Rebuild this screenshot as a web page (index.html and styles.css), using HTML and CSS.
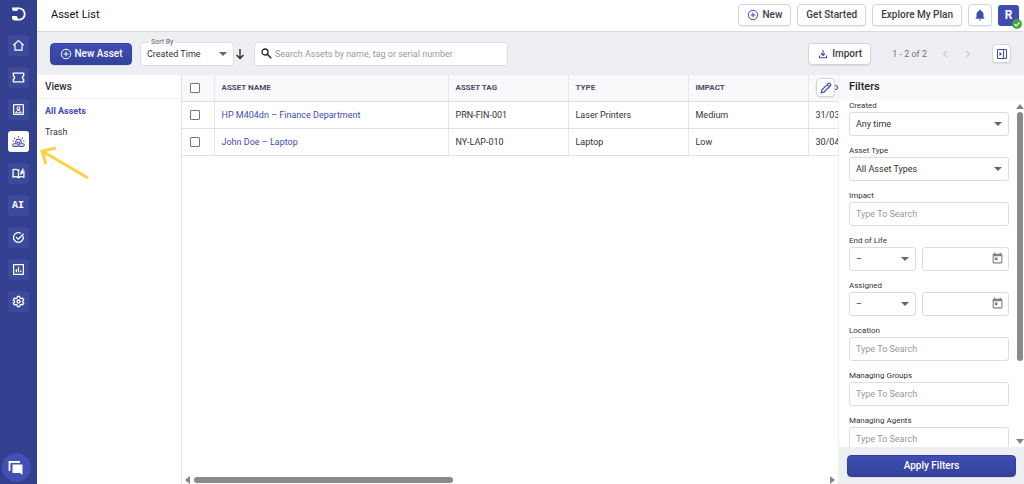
FILE: index.html
```
<!DOCTYPE html>
<html lang="en">
<head>
    <meta charset="UTF-8">
    <meta name="viewport" content="width=device-width, initial-scale=1.0">
    <title>Asset List</title>
    <link rel="stylesheet" href="styles.css">
</head>
<body>

<div class="app">
    <nav class="sidebar">
        <a href="#" class="logo" aria-label="Home page">
            <svg width="16" height="16" viewBox="0 0 16 16"><path d="M7 2.300h2a5.700 5.700 0 0 1 0 11.400H7" fill="none" stroke="#fff" stroke-width="1.800"/><path d="M2 1.500h5.500V5H4.500A2.500 2.500 0 0 1 2 2.500zM2 10h4a1.500 1.500 0 0 1 1.500 1.500v3H5a3 3 0 0 1-3-3z" fill="#fff"/></svg>
        </a>
        <a href="#" class="nav-item" aria-label="Dashboard">
            <svg class="icon" viewBox="0 0 24 24"><path d="M2.500 11.500 12 3l9.500 8.500M5.500 10v10.500h13V10" fill="none" stroke="currentColor" stroke-width="2.200"/></svg>
        </a>
        <a href="#" class="nav-item" aria-label="Tickets">
            <svg class="icon" viewBox="0 0 24 24"><path d="M2.500 4h19v4.700a3.500 3.500 0 0 0 0 6.600V20h-19v-4.700a3.500 3.500 0 0 0 0-6.600z" fill="none" stroke="currentColor" stroke-width="2.600"/></svg>
        </a>
        <a href="#" class="nav-item" aria-label="Contacts">
            <svg class="icon" viewBox="0 0 24 24"><rect x="3" y="3" width="18" height="18" rx="1" fill="none" stroke="currentColor" stroke-width="2.400"/><circle cx="12" cy="9.500" r="2.700" fill="none" stroke="currentColor" stroke-width="2"/><path d="M6.500 18c1-3 3-4 5.500-4s4.500 1 5.500 4z" fill="none" stroke="currentColor" stroke-width="1.800"/></svg>
        </a>
        <a href="#" class="nav-item active" aria-label="Assets">
            <svg class="icon" viewBox="0 0 24 24"><g fill="none" stroke="currentColor" stroke-width="1.900"><path d="M7 15v-2a5 5 0 0 1 10 0v2M12 2v2.500M4 5l2 2M20 5l-2 2M1 11h2.500M20.500 11H23M10 15v-1.500h4V15"/><rect x="1.500" y="16" width="10" height="5" rx="2"/><rect x="12.500" y="16" width="10" height="5" rx="2"/></g></svg>
        </a>
        <a href="#" class="nav-item" aria-label="Knowledge base">
            <svg class="icon" viewBox="0 0 24 24"><path d="M12 20V6.500C9 4 5 4 2 5v13.500c3-1 7-1 10 1.500 3-2.500 7-2.500 10-1.500V7M12 6.500l2-1.300" fill="none" stroke="currentColor" stroke-width="2.400"/><path d="M15.500 9.500 21 1v10l-5.500 4z" fill="currentColor"/></svg>
        </a>
        <a href="#" class="nav-item ai">AI</a>
        <a href="#" class="nav-item" aria-label="Tasks">
            <svg class="icon" viewBox="0 0 24 24"><path d="M20.500 9.500A9 9 0 1 1 16.500 4.200M7.500 11l4 4L21.500 5" fill="none" stroke="currentColor" stroke-width="2.400"/></svg>
        </a>
        <a href="#" class="nav-item" aria-label="Reports">
            <svg class="icon" viewBox="0 0 24 24"><path d="M3 3h18v18H3zM8 17v-6M12 17V7M16 17v-3" fill="none" stroke="currentColor" stroke-width="2.300"/></svg>
        </a>
        <a href="#" class="nav-item" aria-label="Settings">
            <svg class="icon" viewBox="0 0 24 24"><path d="M10 2.500h4l.6 3 2.200 1.200 2.900-1 2 3.500-2.300 2v1.600l2.300 2-2 3.500-2.900-1-2.200 1.200-.6 3h-4l-.6-3-2.200-1.200-2.900 1-2-3.500 2.300-2v-1.600l-2.300-2 2-3.500 2.900 1 2.200-1.200z" fill="none" stroke="currentColor" stroke-width="2.400" stroke-linejoin="round"/><circle cx="12" cy="12" r="2.800" fill="none" stroke="currentColor" stroke-width="2.400"/></svg>
        </a>
        <button type="button" class="chat" aria-label="Chat">
            <svg width="16" height="16" viewBox="0 0 16 16"><path d="M1.500 11V2h10.500" fill="none" stroke="#fff" stroke-width="1.800"/><path d="M4.500 4.500h10V15l-2.500-2H4.500z" fill="#fff"/></svg>
        </button>
    </nav>

    <div class="main">
        <header class="topbar">
            <h1>Asset List</h1>
            <button type="button" class="btn">
                <svg class="icon blue" viewBox="0 0 24 24"><path d="M12 7v10M7 12h10M21.500 12a9.500 9.500 0 1 1-19 0 9.500 9.500 0 0 1 19 0z" fill="none" stroke="currentColor" stroke-width="2"/></svg>
                New
            </button>
            <button type="button" class="btn">Get Started</button>
            <button type="button" class="btn">Explore My Plan</button>
            <button type="button" class="btn square" aria-label="Notifications">
                <svg class="icon blue" viewBox="0 0 24 24"><path d="M12 23a2.200 2.200 0 0 0 2.200-2.200H9.800A2.200 2.200 0 0 0 12 23zm7-6.500V11c0-3.400-1.800-6.200-5-7V3.300a2 2 0 0 0-4 0V4c-3.200.8-5 3.600-5 7v5.500l-2 2v1h18v-1z" fill="currentColor"/></svg>
            </button>
            <button type="button" class="avatar">R
                <svg class="badge" width="10" height="10" viewBox="0 0 10 10"><circle cx="5" cy="5" r="5" fill="#43a838"/><path d="m2.500 5.200 1.800 1.700 3.300-3.500" fill="none" stroke="#fff" stroke-width="1.200"/></svg>
            </button>
        </header>

        <div class="toolbar">
            <button type="button" class="btn primary new-asset">
                <svg class="icon" viewBox="0 0 24 24"><path d="M12 7v10M7 12h10M21.500 12a9.500 9.500 0 1 1-19 0 9.500 9.500 0 0 1 19 0z" fill="none" stroke="currentColor" stroke-width="2"/></svg>
                New Asset
            </button>
            <div class="select sort">
                <label for="sort">Sort By</label>
                <select id="sort"><option>Created Time</option></select>
            </div>
            <button type="button" class="plain direction" aria-label="Sort direction">
                <svg width="10" height="12" viewBox="0 0 10 12"><path d="M5 1v9.500M1.500 7 5 10.500 8.500 7" fill="none" stroke="#222" stroke-width="1.300"/></svg>
            </button>
            <div class="search">
                <svg width="11" height="11" viewBox="0 0 11 11"><circle cx="4" cy="4" r="3" fill="none" stroke="#222" stroke-width="1.300"/><path d="m6.300 6.300 4 4" stroke="#222" stroke-width="1.500"/></svg>
                <input type="text" placeholder="Search Assets by name, tag or serial number" aria-label="Search assets">
            </div>
            <button type="button" class="btn import">
                <svg class="icon blue" viewBox="0 0 24 24"><path d="M12 4v11M8 11l4 4 4-4M5 15v4.500h14V15" fill="none" stroke="currentColor" stroke-width="2.200"/></svg>
                Import
            </button>
            <span class="range">1 - 2 of 2</span>
            <button type="button" class="plain pager" aria-label="Previous"><svg width="6" height="8" viewBox="0 0 6 8"><path d="M5 1 1.500 4 5 7" fill="none" stroke="#bbbdc3"/></svg></button>
            <button type="button" class="plain pager" aria-label="Next"><svg width="6" height="8" viewBox="0 0 6 8"><path d="m1 1 3.500 3L1 7" fill="none" stroke="#bbbdc3"/></svg></button>
            <button type="button" class="btn panel-toggle" aria-label="Toggle filters">
                <svg width="10" height="10" viewBox="0 0 10 10"><path d="M.5.500h9v9h-9zM6.500.500v9" fill="none" stroke="#3f4db0"/><path d="M2.500 3v4L5 5z" fill="#3f4db0"/></svg>
            </button>
        </div>

        <div class="content">
            <aside class="views">
                <h2>Views</h2>
                <a href="#" class="current">All Assets</a>
                <a href="#">Trash</a>
            </aside>

            <section class="list">
                <button type="button" class="btn edit-columns" aria-label="Edit columns">
                    <svg width="12" height="12" viewBox="0 0 12 12"><path d="m1.200 10.800.6-2.800 6.700-6.600q.7-.6 1.400 0l.7.700q.6.700 0 1.400L4 10.200zM7.300 2.600l2.100 2.100" fill="none" stroke="#3f4db0" stroke-width="1.200"/></svg>
                </button>
                <table>
                    <thead>
                        <tr>
                            <th class="check"><input type="checkbox" aria-label="Select all"></th>
                            <th class="name">Asset Name</th>
                            <th>Asset Tag</th>
                            <th>Type</th>
                            <th>Impact</th>
                            <th>End Of Life</th>
                        </tr>
                    </thead>
                    <tbody>
                        <tr>
                            <td class="check"><input type="checkbox" aria-label="Select HP M404dn"></td>
                            <td><a href="#">HP M404dn – Finance Department</a></td>
                            <td>PRN-FIN-001</td>
                            <td>Laser Printers</td>
                            <td>Medium</td>
                            <td>31/03/2030</td>
                        </tr>
                        <tr>
                            <td class="check"><input type="checkbox" aria-label="Select John Doe"></td>
                            <td><a href="#">John Doe – Laptop</a></td>
                            <td>NY-LAP-010</td>
                            <td>Laptop</td>
                            <td>Low</td>
                            <td>30/04/2029</td>
                        </tr>
                    </tbody>
                </table>
                <div class="scroll-x">
                    <svg width="5" height="8" viewBox="0 0 5 8"><path d="M5 0v8L0 4z" fill="#858585"/></svg>
                    <div class="track"><div class="thumb"></div></div>
                    <svg width="5" height="8" viewBox="0 0 5 8"><path d="M0 0v8l5-4z" fill="#858585"/></svg>
                </div>
            </section>

            <aside class="filters">
                <h2>Filters</h2>
                <div class="filter-body">
                    <form class="fields" id="filters">
                        <div class="field">
                            <label for="created">Created</label>
                            <div class="select"><select id="created"><option>Any time</option></select></div>
                        </div>
                        <div class="field">
                            <label for="type">Asset Type</label>
                            <div class="select"><select id="type"><option>All Asset Types</option></select></div>
                        </div>
                        <div class="field">
                            <label for="impact">Impact</label>
                            <input type="text" id="impact" placeholder="Type To Search">
                        </div>
                        <div class="field">
                            <label for="eol">End of Life</label>
                            <div class="pair">
                                <div class="select"><select id="eol"><option>–</option></select></div>
                                <div class="date">
                                    <input type="text" aria-label="End of life date">
                                    <svg viewBox="0 0 24 24"><path d="M19 3h-1V1h-2v2H8V1H6v2H5c-1.110 0-1.990.9-1.990 2L3 19c0 1.100.890 2 2 2h14c1.100 0 2-.9 2-2V5c0-1.100-.9-2-2-2zm0 16H5V8h14v11zM7 10h5v5H7z"/></svg>
                                </div>
                            </div>
                        </div>
                        <div class="field">
                            <label for="assigned">Assigned</label>
                            <div class="pair">
                                <div class="select"><select id="assigned"><option>–</option></select></div>
                                <div class="date">
                                    <input type="text" aria-label="Assigned date">
                                    <svg viewBox="0 0 24 24"><path d="M19 3h-1V1h-2v2H8V1H6v2H5c-1.110 0-1.990.9-1.990 2L3 19c0 1.100.890 2 2 2h14c1.100 0 2-.9 2-2V5c0-1.100-.9-2-2-2zm0 16H5V8h14v11zM7 10h5v5H7z"/></svg>
                                </div>
                            </div>
                        </div>
                        <div class="field">
                            <label for="location">Location</label>
                            <input type="text" id="location" placeholder="Type To Search">
                        </div>
                        <div class="field">
                            <label for="groups">Managing Groups</label>
                            <input type="text" id="groups" placeholder="Type To Search">
                        </div>
                        <div class="field">
                            <label for="agents">Managing Agents</label>
                            <input type="text" id="agents" placeholder="Type To Search">
                        </div>
                    </form>
                    <div class="scroll-y">
                        <svg width="8" height="5" viewBox="0 0 8 5"><path d="M0 5h8L4 0z" fill="#858585"/></svg>
                        <div class="track"><div class="thumb"></div></div>
                        <svg width="8" height="5" viewBox="0 0 8 5"><path d="M0 0h8L4 5z" fill="#858585"/></svg>
                    </div>
                </div>
                <div class="apply">
                    <button type="submit" form="filters" class="btn primary">Apply Filters</button>
                </div>
            </aside>
        </div>
    </div>

    <!-- pointer to the Assets menu item -->
    <svg class="pointer" width="52" height="36" viewBox="0 0 52 36"><path d="M50 32 4 5M18 2 4 5l4 13" fill="none" stroke="#fdd143" stroke-width="3"/></svg>
</div>

</body>
</html>
```

FILE: styles.css
```
* {
    box-sizing: border-box;
}
body {
    margin: 0;
    font-family: Roboto, "Liberation Sans", sans-serif;
    font-size: 9px;
    line-height: 12px;
    color: #333;
    background-color: #fff;
}
button, input, select {
    font: inherit;
    color: inherit;
    margin: 0;
}
a {
    color: inherit;
    text-decoration: none;
}
h1, h2 {
    margin: 0;
    font-weight: 500;
}
.app {
    display: flex;
    height: 100vh;
    position: relative;
    overflow: hidden;
}
.icon {
    width: 12px;
    height: 12px;
    flex: none;
}
.blue {
    color: #3f4db0;
}

/* Sidebar */
.sidebar {
    width: 37px;
    flex: none;
    background-color: #334090;
    display: flex;
    flex-direction: column;
    align-items: center;
    gap: 11px;
    padding: 6px 1px 2px 0;
}
.logo {
    height: 18px;
}
.nav-item {
    width: 21px;
    height: 21px;
    flex: none;
    border-radius: 3px;
    background-color: #3c4a9c;
    color: #fff;
    display: flex;
    align-items: center;
    justify-content: center;
}
.nav-item .icon {
    width: 13px;
    height: 13px;
}
.nav-item.active {
    background-color: #fff;
    color: #3f4db0;
}
.nav-item.ai {
    font-family: "Liberation Mono", monospace;
    font-size: 10px;
    font-weight: bold;
}
.chat {
    width: 29px;
    height: 29px;
    margin: auto 4px 0 0;
    padding: 0;
    border: none;
    border-radius: 50%;
    background-color: #4050b5;
    display: flex;
    align-items: center;
    justify-content: center;
}

/* Top bars */
.main {
    flex: 1;
    min-width: 0;
    display: flex;
    flex-direction: column;
}
.topbar {
    height: 32px;
    flex: none;
    padding: 0 5px 1px 14px;
    border-bottom: 1px solid #d9dadd;
    display: flex;
    align-items: center;
    gap: 6px;
}
.topbar h1 {
    margin-right: auto;
    font-size: 11px;
    font-weight: 400;
    color: #111;
}
.btn {
    height: 22px;
    padding: 0 8px;
    border: 1px solid #d3d5dc;
    border-radius: 4px;
    background-color: #fff;
    box-shadow: 0 1px 1px rgba(0, 0, 0, 0.08);
    font-size: 10px;
    font-weight: 500;
    color: #3a3d4a;
    display: flex;
    align-items: center;
    justify-content: center;
    gap: 3px;
    white-space: nowrap;
}
.btn.primary {
    border-color: #34419a;
    background: linear-gradient(#3f4db5, #35429b);
    color: #fff;
}
.btn.square {
    width: 24px;
    padding: 0;
}
.avatar {
    width: 21px;
    height: 21px;
    padding: 0;
    border: none;
    border-radius: 3px;
    background-color: #3f4db0;
    color: #fff;
    font-size: 12px;
    font-weight: 700;
    position: relative;
}
.badge {
    position: absolute;
    right: -3px;
    bottom: -3px;
}
.toolbar {
    height: 43px;
    flex: none;
    padding: 0 13px;
    background-color: #eeeff2;
    display: flex;
    align-items: center;
}
.new-asset {
    width: 82px;
}
.plain {
    padding: 0;
    border: none;
    background: none;
    display: flex;
    align-items: center;
    justify-content: center;
}
.select {
    height: 24px;
    position: relative;
    border: 1px solid #dcdde1;
    border-radius: 3px;
    background-color: #fff;
}
.select select {
    width: 100%;
    height: 100%;
    padding: 0 18px 0 6px;
    border: none;
    background: none;
    appearance: none;
}
.select::after {
    content: "";
    position: absolute;
    right: 6px;
    top: 9px;
    border: 4px solid transparent;
    border-top-color: #666;
    border-bottom: none;
    pointer-events: none;
}
.select.sort {
    width: 94px;
    margin-left: 8px;
}
.sort label {
    position: absolute;
    top: -5px;
    left: 8px;
    padding: 0 2px;
    font-size: 7px;
    line-height: 8px;
    color: #666;
    background: linear-gradient(#eeeff2 50%, #fff 50%);
}
.direction {
    width: 12px;
}
.search {
    width: 254px;
    height: 24px;
    margin-left: 8px;
    margin-right: auto;
    padding: 0 6px;
    border: 1px solid #dcdde1;
    border-radius: 3px;
    background-color: #fff;
    display: flex;
    align-items: center;
    gap: 3px;
}
.search input {
    flex: 1;
    min-width: 0;
    padding: 0;
    border: none;
    outline: none;
}
::placeholder {
    color: #999;
    opacity: 1;
}
.range {
    margin: 0 14px 0 21px;
    color: #777;
}
.pager {
    width: 8px;
    margin-right: 15px;
}
.panel-toggle {
    width: 19px;
    height: 19px;
    margin-left: 5px;
    padding: 0;
}

/* Views */
.content {
    flex: 1;
    min-height: 0;
    display: flex;
}
.views {
    width: 144px;
    flex: none;
    display: flex;
    flex-direction: column;
}
.views h2 {
    height: 24px;
    margin-bottom: 2px;
    padding: 6px 8px;
    font-size: 10px;
    border-bottom: 1px solid #f0f0f3;
}
.views a {
    padding: 0 8px;
    line-height: 21px;
}
.views a.current {
    color: #3f4db0;
    font-weight: 700;
}

/* Asset table */
.list {
    flex: 1;
    min-width: 0;
    position: relative;
    overflow: hidden;
    border-left: 1px solid #e2e3e8;
    display: flex;
    flex-direction: column;
}
table {
    width: 746px;
    table-layout: fixed;
    border-collapse: collapse;
}
th, td {
    width: 120px;
    height: 27px;
    padding: 0 7px;
    border-right: 1px solid #e6e7ea;
    border-bottom: 1px solid #dfe0e4;
    text-align: left;
    white-space: nowrap;
}
th {
    height: 26px;
    font-size: 8px;
    font-weight: 700;
    color: #4a4d60;
    text-transform: uppercase;
    background-color: #f9f9fc;
}
td a {
    color: #3f4db0;
}
.check {
    width: 32px;
    padding: 0 8px;
}
.name {
    width: 234px;
}
input[type="checkbox"] {
    appearance: none;
    display: block;
    width: 10px;
    height: 10px;
    border: 1px solid #777;
    border-radius: 1px;
    background-color: #fff;
}
.edit-columns {
    position: absolute;
    top: 3px;
    right: 3px;
    width: 19px;
    height: 19px;
    padding: 0;
}
.scroll-x {
    margin-top: auto;
    height: 9px;
    padding: 0 3px;
    display: flex;
    align-items: center;
    gap: 4px;
}
.track {
    flex: 1;
}
.thumb {
    background-color: #8a8a8a;
    border-radius: 3px;
}
.scroll-x .thumb {
    width: 41%;
    height: 6px;
}

/* Filters */
.filters {
    width: 186px;
    flex: none;
    border-left: 1px solid #eeeff2;
    display: flex;
    flex-direction: column;
}
.filters h2 {
    height: 25px;
    padding: 6px 10px;
    font-size: 11px;
    color: #222;
    background-color: #fafafc;
}
.filter-body {
    flex: 1;
    min-height: 0;
    display: flex;
}
.fields {
    flex: 1;
    padding-left: 10px;
    overflow: hidden;
    display: flex;
    flex-direction: column;
    gap: 9px;
}
.field {
    flex: none;
    display: flex;
    flex-direction: column;
}
.field label {
    font-size: 8px;
}
.field input {
    width: 100%;
    height: 24px;
    padding: 0 6px;
    border: 1px solid #dcdde1;
    border-radius: 3px;
}
.pair {
    display: grid;
    grid-template-columns: 67px 1fr;
    gap: 6px;
}
.date {
    position: relative;
}
.date svg {
    position: absolute;
    right: 5px;
    top: 5px;
    width: 13px;
    height: 13px;
    fill: #808080;
}
.scroll-y {
    width: 15px;
    padding: 4px 0 3px 6px;
    display: flex;
    flex-direction: column;
    align-items: center;
    gap: 3px;
}
.scroll-y .thumb {
    width: 6px;
    height: 77%;
}
.apply {
    padding: 8px 8px 7px;
    background-color: #eeeff2;
}
.apply .btn {
    width: 100%;
}

.pointer {
    position: absolute;
    left: 38px;
    top: 146px;
}
```
